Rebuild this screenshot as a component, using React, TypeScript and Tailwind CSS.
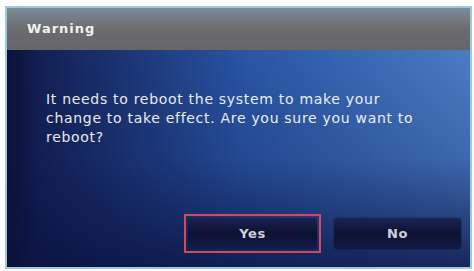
export default function App() {
  return (
    <div className="w-[474px] h-[271px] bg-white pt-[6px] pl-[5px]" style={{ fontFamily: '"DejaVu Sans", Verdana, sans-serif' }}>
      <div className="w-[467px] h-[263px] border-2 border-[#9cc9dc] flex flex-col overflow-hidden">
        {/* title bar */}
        <div className="h-[42px] shrink-0 bg-gradient-to-b from-[#7c8c98] via-[#6c6c70] to-[#666668] flex items-center pl-[20px]">
          <span className="text-white text-[13px] font-bold tracking-[1px] opacity-90">Warning</span>
        </div>
        {/* body */}
        <div className="relative flex-1 flex flex-col bg-gradient-to-r from-[#0f1848] via-[#2854a2] to-[#4a7cc4]">
          <div className="absolute inset-0 bg-gradient-to-b from-transparent via-[#0c1850]/20 to-[#0a1240]/80" />
          <div className="absolute inset-y-0 left-0 w-[30px] bg-gradient-to-r from-[#0a1035]/70 to-transparent" />
          <div className="relative flex-1 flex flex-col">
            <p className="mt-[40px] ml-[39px] w-[380px] text-[14px] tracking-[0.7px] leading-[19px] text-white/90">
              It needs to reboot the system to make your change to take effect. Are you sure you want to reboot?
            </p>
            <div className="mt-auto mb-[14px] flex gap-[13px] pl-[177px] items-center">
              <div className="w-[137px] h-[39px] border-2 border-[#d04a5a] p-[2px]">
                <div className="h-full bg-gradient-to-b from-[#1a2250] via-[#0d1232] to-[#141c48] flex items-center justify-center">
                  <span className="text-white/80 text-[13px] font-bold tracking-[0.5px]">Yes</span>
                </div>
              </div>
              <div className="w-[127px] h-[31px] rounded-[3px] bg-gradient-to-b from-[#1c2455] via-[#0d1232] to-[#121a44] flex items-center justify-center shadow-[0_0_2px_rgba(0,0,0,0.5)]">
                <span className="text-white/80 text-[13px] font-bold tracking-[0.5px]">No</span>
              </div>
            </div>
          </div>
        </div>
      </div>
    </div>
  );
}
